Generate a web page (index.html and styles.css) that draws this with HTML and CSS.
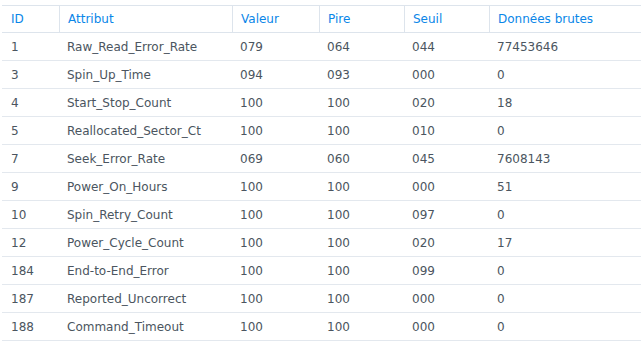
FILE: index.html
```html
<!DOCTYPE html>
<html lang="fr">
<head>
<meta charset="utf-8">
<link rel="stylesheet" href="styles.css">
</head>
<body>
<div class="wrap">
<table class="smart">
<colgroup>
<col class="c-id"><col class="c-attr"><col class="c-val"><col class="c-pire"><col class="c-seuil"><col class="c-raw">
</colgroup>
<thead>
<tr><th>ID</th><th>Attribut</th><th>Valeur</th><th>Pire</th><th>Seuil</th><th>Données brutes</th></tr>
</thead>
<tbody>
<tr><td>1</td><td>Raw_Read_Error_Rate</td><td>079</td><td>064</td><td>044</td><td>77453646</td></tr>
<tr><td>3</td><td>Spin_Up_Time</td><td>094</td><td>093</td><td>000</td><td>0</td></tr>
<tr><td>4</td><td>Start_Stop_Count</td><td>100</td><td>100</td><td>020</td><td>18</td></tr>
<tr><td>5</td><td>Reallocated_Sector_Ct</td><td>100</td><td>100</td><td>010</td><td>0</td></tr>
<tr><td>7</td><td>Seek_Error_Rate</td><td>069</td><td>060</td><td>045</td><td>7608143</td></tr>
<tr><td>9</td><td>Power_On_Hours</td><td>100</td><td>100</td><td>000</td><td>51</td></tr>
<tr><td>10</td><td>Spin_Retry_Count</td><td>100</td><td>100</td><td>097</td><td>0</td></tr>
<tr><td>12</td><td>Power_Cycle_Count</td><td>100</td><td>100</td><td>020</td><td>17</td></tr>
<tr><td>184</td><td>End-to-End_Error</td><td>100</td><td>100</td><td>099</td><td>0</td></tr>
<tr><td>187</td><td>Reported_Uncorrect</td><td>100</td><td>100</td><td>000</td><td>0</td></tr>
<tr><td>188</td><td>Command_Timeout</td><td>100</td><td>100</td><td>000</td><td>0</td></tr>
</tbody>
</table>
</div>
</body>
</html>
```

FILE: styles.css
```css
html, body {
  margin: 0;
  padding: 0;
  background: #ffffff;
}
.wrap {
  padding: 5px 2px 0 2px;
}
.smart {
  width: 639px;
  table-layout: fixed;
  border-collapse: separate;
  border-spacing: 0;
  font-family: "DejaVu Sans", Verdana, sans-serif;
  font-size: 12px;
  color: #4b5560;
  border-top: 1px solid #dde4ec;
}
.c-id { width: 57px; }
.c-attr { width: 173px; }
.c-val { width: 87px; }
.c-pire { width: 85px; }
.c-seuil { width: 85px; }
.c-raw { width: 152px; }
.smart th {
  height: 26px;
  padding: 0 0 0 8px;
  text-align: left;
  font-weight: normal;
  color: #0a86e8;
  border-bottom: 1px solid #dde4ec;
  border-left: 1px solid #dde4ec;
  vertical-align: middle;
  white-space: nowrap;
}
.smart th:first-child {
  border-left: none;
  padding-left: 9px;
}
.smart td {
  height: 27px;
  padding: 0 0 0 9px;
  border-bottom: 1px solid #e3e8ee;
  vertical-align: middle;
  white-space: nowrap;
}
.smart td:nth-child(n+2) {
  padding-left: 8px;
}
```
